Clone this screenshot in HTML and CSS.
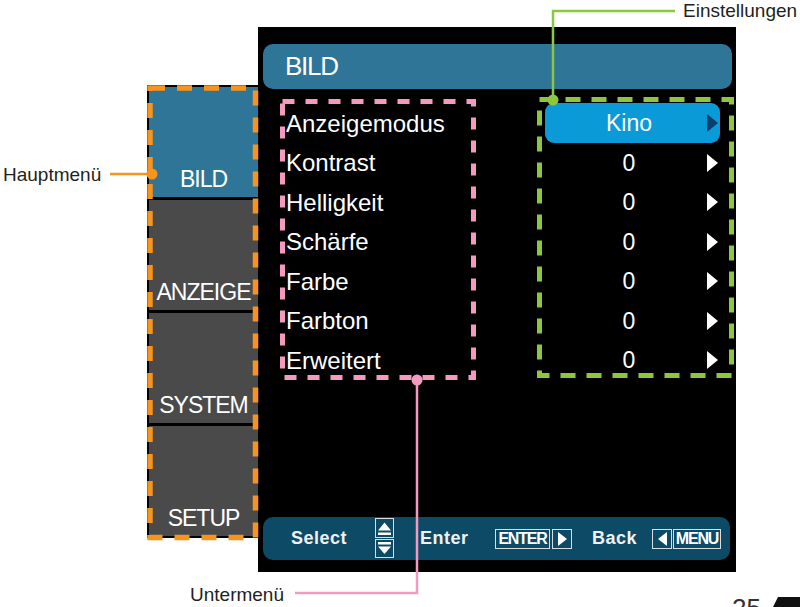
FILE: index.html
```html
<!DOCTYPE html>
<html>
<head>
<meta http-equiv="Content-Type" content="text/html; charset=utf-8"/>
<title>BILD - Menüübersicht</title>
<link rel="stylesheet" href="styles.css">
</head>

<body>
<div class="page">

<div class="stage">
  <div class="mainmenu">
    <div class="tab active">BILD</div>
    <div class="tab">ANZEIGE</div>
    <div class="tab">SYSTEM</div>
    <div class="tab">SETUP</div>
  </div>

  <div class="osd">
    <div class="title">BILD</div>

    <div class="rows">
      <div class="row"><span class="label">Anzeigemodus</span><span class="value sel"><span>Kino</span><i class="arr"></i></span></div>
      <div class="row"><span class="label">Kontrast</span><span class="value"><span>0</span><i class="arr"></i></span></div>
      <div class="row"><span class="label">Helligkeit</span><span class="value"><span>0</span><i class="arr"></i></span></div>
      <div class="row"><span class="label">Schärfe</span><span class="value"><span>0</span><i class="arr"></i></span></div>
      <div class="row"><span class="label">Farbe</span><span class="value"><span>0</span><i class="arr"></i></span></div>
      <div class="row"><span class="label">Farbton</span><span class="value"><span>0</span><i class="arr"></i></span></div>
      <div class="row"><span class="label">Erweitert</span><span class="value"><span>0</span><i class="arr"></i></span></div>
    </div>

    <div class="help">
      <span class="hk hk-select">Select</span>
      <svg class="updown" width="19" height="40" viewBox="0 0 19 40">
        <rect x="0.5" y="0.5" width="18" height="19" fill="none" stroke="#d5dee3"/>
        <path d="M3 12.5 L9.5 4.5 L16 12.5 Z" fill="#fff"/>
        <rect x="3" y="14.5" width="13" height="2.5" fill="#fff"/>
        <rect x="0.5" y="21.5" width="18" height="18" fill="none" stroke="#d5dee3"/>
        <rect x="3" y="24" width="13" height="2.5" fill="#fff"/>
        <path d="M3 28.5 L16 28.5 L9.5 36 Z" fill="#fff"/>
      </svg>
      <span class="hk hk-enter">Enter</span>
      <span class="key key-enter">ENTER</span>
      <span class="key key-arrow"><i class="tri-right"></i></span>
      <span class="hk hk-back">Back</span>
      <span class="key key-arrow"><i class="tri-left"></i></span>
      <span class="key key-menu">MENU</span>
    </div>
  </div>
</div>

<!-- callouts over the screen -->
<svg class="marks" width="800" height="607" viewBox="0 0 800 607">
  <rect x="150" y="88" width="105.5" height="449.5" fill="none" stroke="#f7941d" stroke-width="5.5" stroke-dasharray="15 12"/>
  <rect x="282.5" y="101.5" width="191" height="276" fill="none" stroke="#f49ac1" stroke-width="5" stroke-dasharray="12 11"/>
  <rect x="539.5" y="99.5" width="192" height="276" fill="none" stroke="#8dc63f" stroke-width="5" stroke-dasharray="15 11"/>
  <polyline points="553,100 553,11 675,11" fill="none" stroke="#8dc63f" stroke-width="2.5"/>
  <circle cx="553" cy="100" r="5.5" fill="#8dc63f"/>
  <line x1="110" y1="174" x2="152" y2="174" stroke="#f7941d" stroke-width="2.5"/>
  <circle cx="152" cy="174" r="5.5" fill="#f7941d"/>
  <polyline points="417,380 417,593 295,593" fill="none" stroke="#f49ac1" stroke-width="2.5"/>
  <circle cx="417" cy="380" r="5.5" fill="#f49ac1"/>
  <polygon points="778,597 800,597 800,607 773,607" fill="#111"/>
</svg>

<span class="note note-einst">Einstellungen</span>
<span class="note note-haupt">Hauptmenü</span>
<span class="note note-unter">Untermenü</span>
<span class="note pagenum">25</span>

</div>
</body>
</html>
```

FILE: styles.css
```css
body {
   margin: 0;
   background-color: white;
   font-family: "Liberation Sans", Arial, sans-serif;
}

.page {
   position: relative;
   width: 800px;
   height: 607px;
   overflow: hidden;
}

.stage {
   display: flex;
   align-items: flex-start;
   padding: 27px 0 0 147px;
}

/* left column with the four main tabs */
.mainmenu {
   margin-top: 58px;
   width: 111px;
   box-sizing: border-box;
   padding: 2px 0 2px 2px;
   background-color: #000;
   display: flex;
   flex-direction: column;
   gap: 3px;
}

.tab {
   height: 110px;
   box-sizing: border-box;
   padding-bottom: 6px;
   background-color: #4a4a4a;
   color: #fff;
   font-size: 23px;
   line-height: 23px;
   letter-spacing: -1px;
   display: flex;
   align-items: flex-end;
   justify-content: center;
}

.tab.active {
   background-color: #2e7598;
}

/* the black on-screen display */
.osd {
   width: 478px;
   height: 545px;
   box-sizing: border-box;
   padding: 17px 4px 12px 5px;
   background-color: #000;
   color: #fff;
   display: flex;
   flex-direction: column;
}

.title {
   height: 45px;
   line-height: 45px;
   padding-left: 22px;
   border-radius: 10px;
   background-color: #2e7598;
   font-size: 26px;
   letter-spacing: -1.3px;
}

.rows {
   margin-top: 14.5px;
}

.row {
   display: flex;
   align-items: center;
   height: 39.5px;
}

.label {
   width: 282px;
   box-sizing: border-box;
   padding-left: 23px;
   font-size: 24px;
   line-height: 39.5px;
}

.value {
   width: 175px;
   height: 40px;
   box-sizing: border-box;
   padding: 0 2px 0 6px;
   border-radius: 9px;
   display: grid;
   grid-template-columns: 1fr 11px;
   align-items: center;
   text-align: center;
   font-size: 23px;
   line-height: 40px;
}

.value.sel {
   background-color: #0a9ad8;
}

.arr {
   width: 0;
   height: 0;
   border-left: 11px solid #fff;
   border-top: 9px solid transparent;
   border-bottom: 9px solid transparent;
}

.sel .arr {
   border-left-color: #0c3d6c;
}

/* key help bar */
.help {
   margin-top: auto;
   margin-right: 2px;
   height: 43px;
   padding-left: 28px;
   border-radius: 10px;
   background-color: #0d4a66;
   color: #eef2f4;
   display: flex;
   align-items: center;
   font-size: 18px;
   font-weight: bold;
   line-height: 43px;
   letter-spacing: 0.5px;
}

.hk-select {
   width: 84px;
}

.updown {
   display: block;
   margin-top: -2px;
}

.hk-enter {
   margin-left: 26px;
   width: 75px;
}

.hk-back {
   margin-left: 20px;
   width: 60px;
}

.key {
   height: 20px;
   box-sizing: border-box;
   border: 1px solid #d5dee3;
   display: flex;
   align-items: center;
   justify-content: center;
   font-size: 16px;
   line-height: 18px;
   letter-spacing: -1.2px;
   color: #fff;
}

.key-enter {
   width: 55px;
   margin-right: 2px;
}

.key-menu {
   width: 48px;
   margin-left: 1px;
}

.key-arrow {
   width: 20px;
}

.tri-right {
   width: 0;
   height: 0;
   border-left: 9px solid #fff;
   border-top: 7px solid transparent;
   border-bottom: 7px solid transparent;
}

.tri-left {
   width: 0;
   height: 0;
   border-right: 9px solid #fff;
   border-top: 7px solid transparent;
   border-bottom: 7px solid transparent;
}

/* callouts */
.marks {
   position: absolute;
   left: 0;
   top: 0;
   pointer-events: none;
}

.note {
   position: absolute;
   font-size: 19px;
   line-height: 19px;
   color: #231f20;
   white-space: nowrap;
}

.note-einst {
   left: 683px;
   top: 1px;
}

.note-haupt {
   left: 3px;
   top: 165px;
}

.note-unter {
   left: 190px;
   top: 585px;
}

.pagenum {
   left: 732px;
   top: 595px;
   font-size: 26px;
   line-height: 26px;
   color: #333;
}
```
